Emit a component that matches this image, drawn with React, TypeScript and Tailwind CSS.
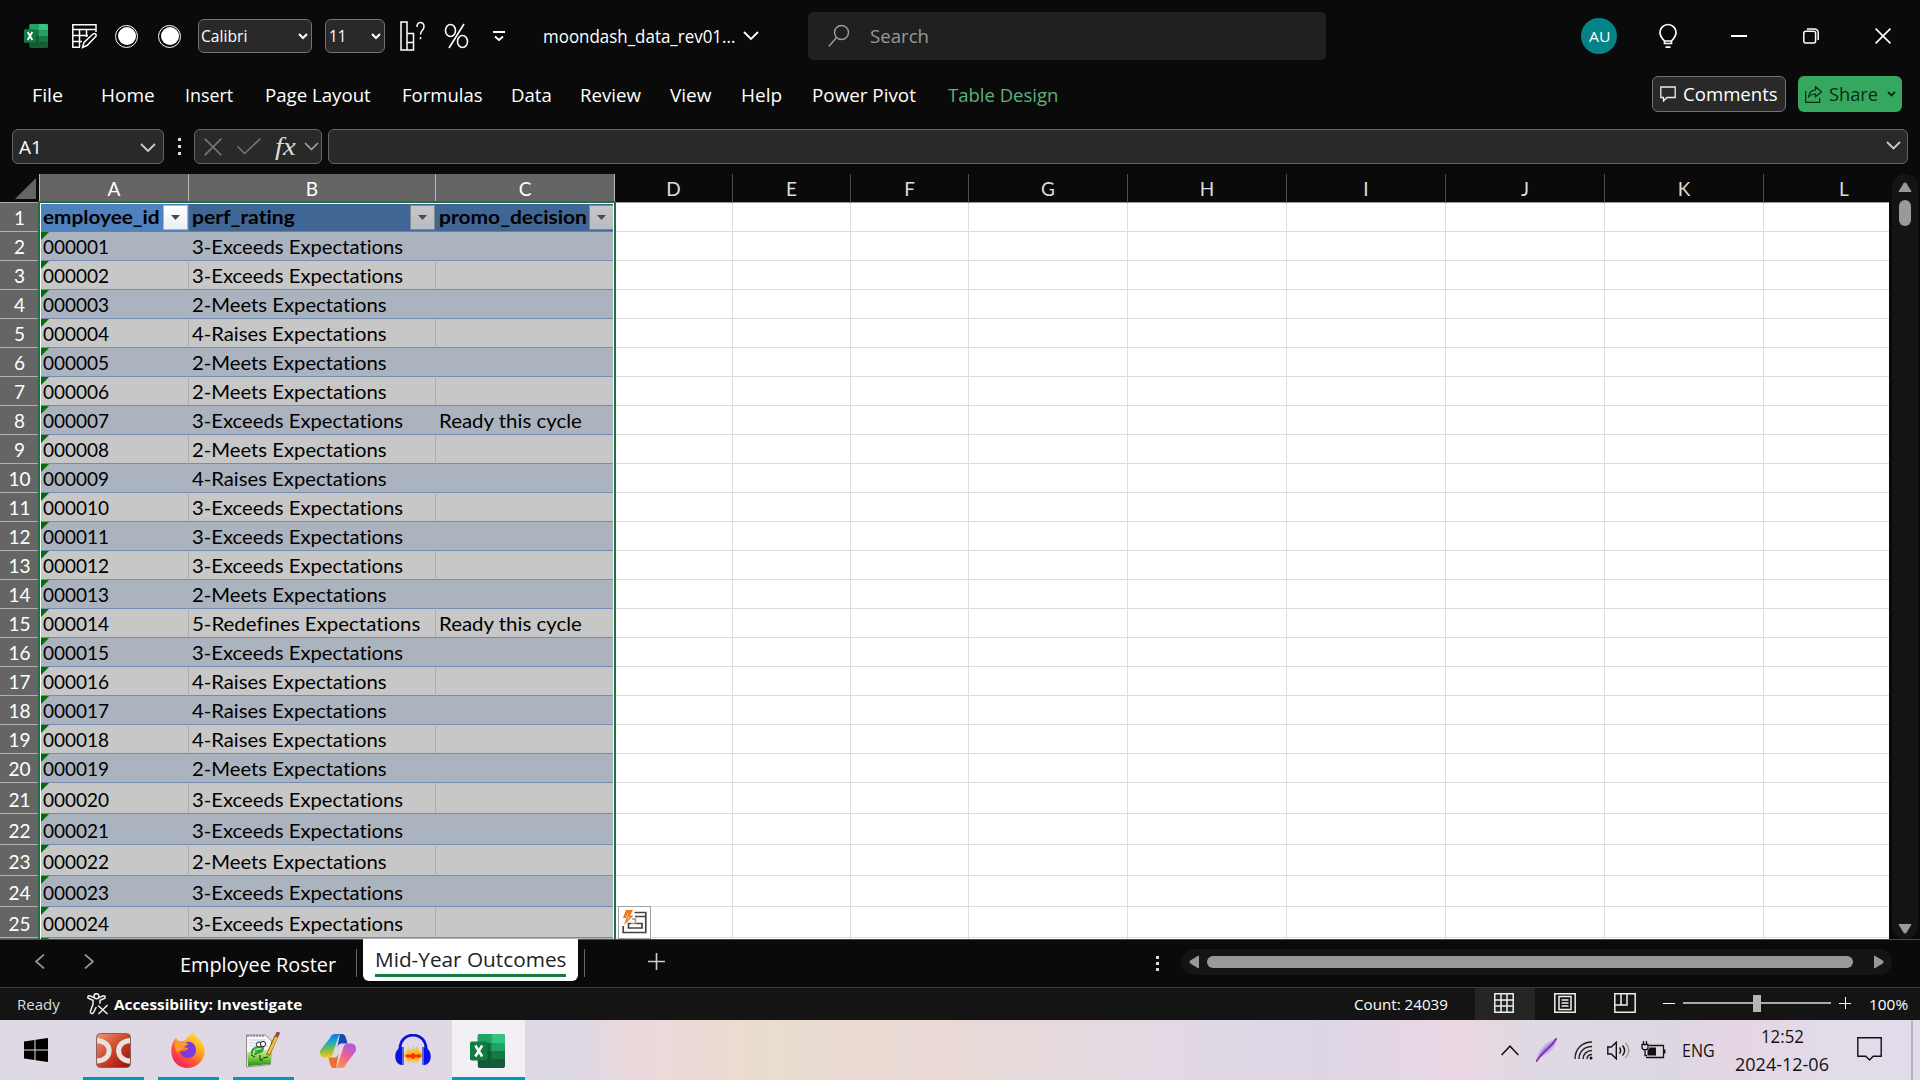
import React, { useLayoutEffect, useRef, useState } from 'react';

/* Text set to a given advance width, so labels keep their place in the bars. */
function Fit({ w, children, className = '' }: { w: number; children: string; className?: string }) {
  const ref = useRef<HTMLSpanElement>(null);
  const [s, setS] = useState(1);
  useLayoutEffect(() => {
    if (ref.current) setS(w / ref.current.offsetWidth);
  }, [w]);
  return (
    <span className={'block shrink-0 whitespace-nowrap ' + className} style={{ width: w }}>
      <span ref={ref} className="inline-block origin-left" style={{ transform: `scaleX(${s})` }}>
        {children}
      </span>
    </span>
  );
}

function Chevron({ w = 14, className = '', sw = 1.8 }: { w?: number; className?: string; sw?: number }) {
  return (
    <svg width={w} height={w / 2 + 2} viewBox={`0 0 ${w} ${w / 2 + 2}`} fill="none" stroke="currentColor" strokeWidth={sw} className={'shrink-0 ' + className}>
      <path d={`M1 1 L${w / 2} ${w / 2} L${w - 1} 1`} />
    </svg>
  );
}

function ExcelIcon({ className }: { className: string }) {
  return (
    <svg viewBox="0 0 36 34" preserveAspectRatio="none" className={className}>
      <rect x="8" y="0" width="28" height="34" rx="2" fill="#185c37" />
      <path d="M8 2a2 2 0 0 1 2-2h12v9H8z" fill="#21a366" />
      <path d="M22 0h12a2 2 0 0 1 2 2v7H22z" fill="#33c481" />
      <path d="M8 9h14v8H8z" fill="#107c41" />
      <path d="M22 9h14v8H22z" fill="#21a366" />
      <path d="M22 17h14v8H22z" fill="#107c41" />
      <rect x="8" y="9" width="12" height="20" fill="#0b4d2a" opacity=".45" />
      <rect x="0" y="7.5" width="18" height="19" rx="1.8" fill="#107c41" />
      <path d="M5.500 11.500l7 11M12.500 11.500l-7 11" stroke="#fff" strokeWidth="2.600" />
    </svg>
  );
}

function TitleBar() {
  return (
    <div className="flex h-[72px] items-center text-white">
      <ExcelIcon className="ml-6 h-6 w-6 shrink-0" />
      <svg className="ml-[23px] h-[26px] w-[26px] shrink-0" viewBox="0 0 26 26" fill="none" stroke="#fff" strokeWidth="1.5">
        <path d="M25 9V1.8H1.8V24.2H9M1.8 6.5H25M1.8 12.5H17M1.8 18.5H11M8.500 6.5V24M15.5 6.5V14" />
        <path d="M11.5 24.5l1.5-5L22 11c2-1.5 4 .5 2.700 2.500L16 22.500z" />
      </svg>
      <span className="ml-[18px] flex size-[23px] shrink-0 items-center justify-center rounded-full border border-white"><span className="size-[18px] rounded-full bg-white" /></span>
      <span className="ml-5 flex size-[23px] shrink-0 items-center justify-center rounded-full border border-white"><span className="size-[18px] rounded-full bg-white" /></span>
      <div className="ml-[17px] flex h-[34px] w-[114px] shrink-0 items-center justify-between rounded-md border border-[#737373] bg-[#292929] pl-[2px] pr-[3px] text-base">
        <Fit w={46}>Calibri</Fit><Chevron w={10} sw={2} />
      </div>
      <div className="ml-[13px] flex h-[34px] w-[60px] shrink-0 items-center justify-between rounded-md border border-[#737373] bg-[#292929] pl-[3px] pr-[3px] text-base">
        <Fit w={17}>11</Fit><Chevron w={10} sw={2} />
      </div>
      <svg className="ml-[15px] h-[30px] w-[25px] shrink-0" viewBox="0 0 25 30" fill="none" stroke="#fff" strokeWidth="1.500">
        <path d="M1 1h6v28H1zM7 12.500h6.500V29H7M7 21.500h6.500" />
        <path d="M17 6c0-6 7-6 7-.5 0 4-3.500 3.500-3.500 8M20.500 16v2.200" />
      </svg>
      <svg className="ml-[19px] h-[26px] w-[25px] shrink-0" viewBox="0 0 25 26" fill="none" stroke="#fff" strokeWidth="1.600">
        <ellipse cx="6.500" cy="7.500" rx="5" ry="6" /><ellipse cx="18.500" cy="18.500" rx="5" ry="6" /><path d="M20 1L5 25" />
      </svg>
      <svg className="ml-[24px] h-3 w-3 shrink-0" viewBox="0 0 12 12" fill="none" stroke="#fff" strokeWidth="2"><path d="M0 2h12M2 6.500l4 3.500 4-3.500" /></svg>
      <Fit w={192} className="ml-[38px] text-[18px]">moondash_data_rev01...</Fit>
      <Chevron w={16} className="ml-2" />
      <div className="ml-[49px] flex h-12 w-[518px] shrink-0 items-center rounded-[5px] bg-[#202020] text-[#999]">
        <svg className="ml-5 h-[24px] w-[22px]" viewBox="0 0 22 24" fill="none" stroke="#999" strokeWidth="1.500"><circle cx="13.500" cy="8.500" r="7" /><path d="M8.500 13.500L.8 22.500" /></svg>
        <Fit w={59} className="ml-[20px] pt-px text-[18px]">Search</Fit>
      </div>
      <span className="ml-[255px] flex size-9 shrink-0 items-center justify-center rounded-full bg-[#038387] text-[15px]"><Fit w={21}>AU</Fit></span>
      <svg className="ml-[42px] h-[26px] w-[18px] shrink-0" viewBox="0 0 18 26" fill="none" stroke="#fff" strokeWidth="1.700">
        <path d="M5.500 20.500V18C2.500 15 1 12.500 1 9.500a8 8 0 0 1 16 0c0 3-1.500 5.500-4.500 8.500v2.500zM5.500 18h7M6.500 24.200h5" />
      </svg>
      <span className="ml-[54px] h-[1.500px] w-4 shrink-0 bg-white" />
      <svg className="ml-[56px] size-4 shrink-0" viewBox="0 0 16 16" fill="none" stroke="#fff" strokeWidth="1.500"><rect x=".8" y="3.300" width="11.800" height="11.800" rx="2" /><path d="M4 .9h7.500a3.700 3.700 0 0 1 3.700 3.700V12" /></svg>
      <svg className="ml-[56px] size-4 shrink-0" viewBox="0 0 16 16" stroke="#fff" strokeWidth="1.600"><path d="M.6.600l14.800 14.800M15.400.600L.6 15.400" /></svg>
    </div>
  );
}

function Menu() {
  return (
    <div className="flex h-[45px] items-center border-b border-[#050505] text-[19px] text-white">
      <div className="flex pt-[2px]">
        <Fit w={31} className="ml-8">File</Fit>
        <Fit w={54} className="ml-[38px]">Home</Fit>
        <Fit w={48} className="ml-[30px]">Insert</Fit>
        <Fit w={106} className="ml-[32px]">Page Layout</Fit>
        <Fit w={81} className="ml-[31px]">Formulas</Fit>
        <Fit w={41} className="ml-[28px]">Data</Fit>
        <Fit w={61} className="ml-[28px]">Review</Fit>
        <Fit w={42} className="ml-[29px]">View</Fit>
        <Fit w={41} className="ml-[29px]">Help</Fit>
        <Fit w={104} className="ml-[30px]">Power Pivot</Fit>
        <Fit w={110} className="ml-[32px] text-[#5bb37c]">Table Design</Fit>
      </div>
      <div className="ml-[594px] flex h-9 w-[134px] shrink-0 items-center rounded-md border border-[#737373] bg-[#292929] pl-[7px]">
        <svg className="h-4 w-4 shrink-0" viewBox="0 0 16 16" fill="none" stroke="#eee" strokeWidth="1.300"><path d="M.8 1h14.400v10.500H7L3.500 15v-3.500H.8z" /></svg>
        <Fit w={95} className="ml-[7px] pt-px">Comments</Fit>
      </div>
      <div className="ml-3 flex h-9 w-[104px] shrink-0 items-center rounded-md bg-[#36a75e] pl-[7px] text-[#0b2a16]">
        <svg className="h-[17px] w-[17px] shrink-0" viewBox="0 0 17 17" fill="none" stroke="currentColor" strokeWidth="1.200"><path d="M.7 5v11.300h14V12M10.500.8l6 5-6 5V8C7 8 5 9 3.500 11.500 4 7 6.500 4 10.500 3.800z" /></svg>
        <Fit w={49} className="ml-[7px] pt-px">Share</Fit>
        <Chevron w={9} className="ml-[9px]" />
      </div>
    </div>
  );
}

function FormulaBar() {
  const box = 'flex h-[35px] shrink-0 items-center rounded-md border border-[#666] bg-[#292929]';
  return (
    <div className="flex h-[57px] items-start bg-[#0a0a0a] pt-3 text-white">
      <div className={box + ' ml-3 w-[152px] justify-between pl-[6px] pr-[7px] text-[19px]'}><Fit w={23} className="pt-px">A1</Fit><Chevron w={16} className="mt-[2px] text-[#ccc]" /></div>
      <div className="ml-[14px] flex h-[35px] w-1 flex-col justify-center gap-1"><i className="size-[3px] bg-[#ddd]" /><i className="size-[3px] bg-[#ddd]" /><i className="size-[3px] bg-[#ddd]" /></div>
      <div className={box + ' ml-[12px] w-[128px]'}>
        <svg className="ml-[9px] h-[18px] w-[18px] shrink-0" viewBox="0 0 18 18" stroke="#777" strokeWidth="1.500"><path d="M.6.600l16.800 16.800M17.400.600L.6 17.400" /></svg>
        <svg className="ml-[15px] h-[17px] w-[24px] shrink-0" viewBox="0 0 24 17" fill="none" stroke="#777" strokeWidth="1.500"><path d="M.6 8.500l7 7L23.400.600" /></svg>
        <Fit w={21} className="ml-[14px] font-['Liberation_Serif'] text-[26px] leading-[30px] text-[#ddd] italic">fx</Fit>
        <Chevron w={15} className="ml-[8px] text-[#aaa]" sw={1.5} />
      </div>
      <div className={box + ' ml-[6px] w-[1580px] justify-end pr-[6px]'}><Chevron w={15} className="mb-[2px] text-[#ccc]" /></div>
    </div>
  );
}

const E = ['', '', '2-Meets Expectations', '3-Exceeds Expectations', '4-Raises Expectations', '5-Redefines Expectations'];
const EW = [0, 0, 195, 211, 195, 228];
const ratings = [3, 3, 2, 4, 2, 2, 3, 2, 4, 3, 3, 3, 2, 5, 3, 4, 4, 4, 2, 3, 3, 2, 3, 3];
const blankCols = ['D', 'E', 'F', 'G', 'H', 'I', 'J', 'K', 'L'];

function FilterButton({ active = false }: { active?: boolean }) {
  return (
    <span className={'flex h-[25px] w-[25px] shrink-0 items-center justify-center border ' + (active ? 'border-[#a9b5c6] bg-linear-to-b from-white to-[#eceef4]' : 'border-[#85888e] bg-linear-to-b from-[#c7c7c7] to-[#b9bbc1]')}>
      <svg width="9" height="5" viewBox="0 0 9 5"><path d="M0 0h9L4.500 5z" fill="#4b4b4b" /></svg>
    </span>
  );
}

function BlankCells() {
  return (
    <>
      {blankCols.map((c, i) => (
        <span key={c} className={'shrink-0 border-b border-[#dedede] bg-white ' + (i < 3 ? 'w-[118px] border-r' : i < 8 ? 'w-[159px] border-r' : 'w-[126px]')} />
      ))}
    </>
  );
}

function Sheet() {
  return (
    <div className="relative h-[765px] w-[1889px] shrink-0 overflow-hidden font-['Lato',sans-serif] text-[19px] [font-variant-ligatures:none]">
      <div className="flex h-[29px] text-center text-[19px] leading-[30px] text-white">
        <span className="flex w-[39px] shrink-0 items-end justify-end border-b border-[#aaa] pr-[3px] pb-[3px]">
          <svg width="21" height="21"><path d="M21 0V21H0z" fill="#656565" /></svg>
        </span>
        <span className="w-[150px] shrink-0 border-r border-l border-[#b8b8b8] bg-[#656565]">A</span>
        <span className="w-[247px] shrink-0 border-r border-[#b8b8b8] bg-[#656565]">B</span>
        <span className="w-[179px] shrink-0 border-r border-[#b8b8b8] bg-[#656565]">C</span>
        {blankCols.map((c, i) => (
          <span key={c} className={'shrink-0 border-b border-b-[#999] border-r-[#4d4d4d] text-[#ddd] ' + (i < 3 ? 'w-[118px] border-r' : i < 8 ? 'w-[159px] border-r' : 'w-[126px] pl-[34px]')}>{c}</span>
        ))}
      </div>
      <div className="flex h-[29px]">
        <span className="w-[39px] shrink-0 border-b border-[#b0b0b0] bg-[#656565] text-center leading-[30px] text-white">1</span>
        <span className="flex w-[150px] shrink-0 items-center justify-between border-b border-[#6181ae] bg-[#4f81bd] pl-[4px] pr-[1px] font-bold"><Fit w={117} className="pt-px">employee_id</Fit><FilterButton active /></span>
        <span className="flex w-[247px] shrink-0 items-center justify-between border-b border-[#6181ae] bg-[#3f6695] pl-[3px] pr-[1px] font-bold"><Fit w={103} className="pt-px">perf_rating</Fit><FilterButton /></span>
        <span className="flex w-[179px] shrink-0 items-center justify-between border-b border-[#6181ae] bg-[#3f6695] pl-[3px] pr-[1px] font-bold"><Fit w={148} className="pt-px">promo_decision</Fit><FilterButton /></span>
        <BlankCells />
      </div>
      {ratings.concat(0).map((r, i) => {
        const band = i % 2 === 0;
        const cell = 'flex shrink-0 items-end border-b border-b-[#738cb0] leading-[26px] ' + (band ? 'bg-[#abb3bf] border-r border-r-[#abb3bf] ' : 'bg-[#c7c7c7] border-r border-r-[#adadad] ');
        return (
          <div key={i} className={'flex text-black ' + (i < 19 ? 'h-[29px]' : 'h-[31px]')}>
            <span className="flex w-[39px] shrink-0 items-end justify-center border-b border-[#b0b0b0] bg-[#656565] leading-[26px] text-white">{r > 0 && String(i + 2)}</span>
            <span className={cell + 'relative w-[150px] pl-[4px]'}>
              <svg className="absolute top-0 left-[2px]" width="8" height="8"><path d="M0 0h8L0 8z" fill="#056b05" /></svg>
              {r > 0 && <Fit w={66}>{String(i + 1).padStart(6, '0')}</Fit>}
            </span>
            <span className={cell + 'w-[247px] pl-[3px]'}>{r > 0 && <Fit w={EW[r]}>{E[r]}</Fit>}</span>
            <span className={cell + 'w-[179px] pl-[3px]'}>{(i === 6 || i === 13) && <Fit w={143}>Ready this cycle</Fit>}</span>
            <BlankCells />
          </div>
        );
      })}
      <div className="absolute top-[27px] left-[38px] h-[760px] w-[578px] border-2 border-[#1f7246]"><div className="h-full border border-white" /></div>
      <div className="absolute top-[732px] left-[618px] flex h-[33px] w-[33px] items-center justify-center border border-[#a0a0a0] bg-white">
        <svg width="25" height="25" viewBox="0 0 25 25" fill="none">
          <path d="M12.500 2.500h11.300v20H1.200V16M13 6.500h10.800M9 13.500H6.500v4.500h13.500v-4.500h-6" stroke="#444" strokeWidth="1.700" />
          <path d="M10 9h3.500v4.500H9" stroke="#999" strokeWidth="1.500" />
          <path d="M4 0h7L8 5.500h3.500L2 15l2.500-7H1z" fill="#e8761a" /><path d="M6 3L4.500 7l3 .5L5 10" stroke="#ffc08a" />
        </svg>
      </div>
    </div>
  );
}

function TabBar() {
  return (
    <div className="flex h-[49px] border-t border-b border-t-[#4a4a4a] border-b-[#3a3a3a] text-[20px] text-white">
      <svg className="mt-[14px] ml-[35px] shrink-0" width="10" height="15" fill="none" stroke="#999" strokeWidth="1.700"><path d="M9 .6L1 7.500l8 6.900" /></svg>
      <svg className="mt-[14px] ml-[39px] shrink-0" width="10" height="15" fill="none" stroke="#999" strokeWidth="1.700"><path d="M1 .6l8 6.900-8 6.900" /></svg>
      <Fit w={156} className="mt-[10px] ml-[86px] leading-[30px]">Employee Roster</Fit>
      <span className="mt-[9px] ml-[20px] h-7 w-px bg-[#666]" />
      <div className="-mt-px ml-[6px] flex h-[42px] w-[215px] shrink-0 flex-col items-center rounded-b-md bg-white font-medium text-[#222]">
        <Fit w={191} className="mt-[5px] h-[30px] leading-[32px]">Mid-Year Outcomes</Fit>
        <span className="h-[3px] w-[191px] bg-[#107c41]" />
      </div>
      <span className="mt-[9px] ml-[6px] h-7 w-px bg-[#666]" />
      <svg className="mt-[13px] ml-[63px] shrink-0" width="17" height="17" stroke="#ccc" strokeWidth="1.600"><path d="M0 8.500h17M8.500 0v17" /></svg>
      <div className="mt-[16px] ml-[491px] flex w-1 flex-col gap-[3px]"><i className="size-[3px] bg-[#ddd]" /><i className="size-[3px] bg-[#ddd]" /><i className="size-[3px] bg-[#ddd]" /></div>
      <div className="mt-[9px] ml-[21px] flex h-[26px] w-[711px] shrink-0 items-center rounded-full bg-[#141414] pl-2">
        <svg width="10" height="14"><path d="M9.500 1v12L1 7.800V6.200z" fill="#999" stroke="#999" strokeLinejoin="round" /></svg>
        <span className="ml-2 h-3 w-[646px] rounded-full bg-[#999]" />
        <svg className="ml-[21px]" width="10" height="14"><path d="M.5 1v12L9 7.800V6.200z" fill="#999" stroke="#999" strokeLinejoin="round" /></svg>
      </div>
    </div>
  );
}

function StatusBar() {
  return (
    <div className="flex h-8 items-center bg-[#141414] text-[15px] text-white">
      <Fit w={43} className="ml-[17px] text-[#ddd]">Ready</Fit>
      <svg className="ml-[27px] shrink-0" width="22" height="22" viewBox="0 0 22 22" fill="none" stroke="#eee" strokeWidth="1.500">
        <circle cx="9.500" cy="3.200" r="2.500" />
        <path d="M7 4.500L2.500 2.800C.5 2.500.2 4.800 1.800 5.500L6 7.300v4L3.500 18c-.5 2.500 2 3.500 3 1.500L9.300 14M12 4.500l4.500-1.700c2-.3 2.300 2 .7 2.700L13 7.300v3.500M11 12.500l9.500 8.500M20.500 12L11.500 21" />
      </svg>
      <Fit w={188} className="ml-[5px] font-bold">Accessibility: Investigate</Fit>
      <Fit w={94} className="ml-[1052px]">Count: 24039</Fit>
      <div className="ml-[27px] flex h-full w-[60px] shrink-0 items-center justify-center bg-[#252525] pr-[2px] pb-[2px]">
        <svg width="20" height="20" fill="none" stroke="#eee" strokeWidth="1.500"><path d="M.8.800h18.400v18.400H.8zM7 1v18M13 1v18M1 7h18M1 13h18" /></svg>
      </div>
      <svg className="mb-[2px] ml-[19px] shrink-0" width="22" height="20" fill="none" stroke="#eee" strokeWidth="1.500"><path d="M.8.800h20.400v18.400H.8zM5 3.500h12v13H5zM7.500 7h7M7.500 10h7M7.500 13h7" /></svg>
      <svg className="mb-[2px] ml-[38px] shrink-0" width="22" height="20" fill="none" stroke="#eee" strokeWidth="1.500"><path d="M.8.800h20.400v18.400H.8zM1 12h12V1M7 1v11" /></svg>
      <span className="mb-[2px] ml-[27px] h-px w-3 shrink-0 bg-white" />
      <div className="mb-[2px] ml-[8px] flex h-[18px] w-[148px] shrink-0 items-center"><span className="h-[2px] w-[70px] bg-[#aaa]" /><span className="h-[17px] w-2 bg-[#b5b5b5]" /><span className="h-[2px] w-[70px] bg-[#aaa]" /></div>
      <svg className="mb-[2px] ml-2 shrink-0" width="12" height="12" stroke="#fff" strokeWidth="1"><path d="M0 6.500h12M6.500 0v12" /></svg>
      <Fit w={39} className="ml-[18px]">100%</Fit>
    </div>
  );
}

function Taskbar() {
  const slot = 'flex h-[60px] shrink-0 items-center justify-center border-b-[3px] ';
  return (
    <div className="flex h-[60px] items-center bg-[linear-gradient(90deg,#dfd9e4_0%,#dfd8e5_30%,#ead9dc_33%,#e9dccf_39%,#e8d9d6_50%,#e2d9e4_60%,#ded6e6_69%,#ead7e3_76%,#ded9e2_80%,#ddd7e2_87%,#e6d6e3_91%,#e2dbe8_95%,#e2dcea_100%)] text-[#111]">
      <svg className="ml-6 shrink-0" width="24" height="24"><path d="M0 3.500L10.500 2v9.500H0zM11.500 1.800L24 0v11.500H11.500zM0 12.500h10.500V22L0 20.500zM11.500 12.500H24V24l-12.500-1.800z" fill="#000" /></svg>
      <span className={slot + 'ml-[35px] w-[61px] border-[#0099bc] pt-[3px]'}>
        <svg width="35" height="35" viewBox="0 0 35 35">
          <defs><linearGradient id="dc" x1="0" x2="1" y2="1"><stop stopColor="#ef9d7b" /><stop offset=".5" stopColor="#cc4428" /><stop offset="1" stopColor="#960b05" /></linearGradient><clipPath id="dcc"><rect x=".5" y=".5" width="34" height="34" rx="4" /></clipPath></defs>
          <g clipPath="url(#dcc)"><rect width="35" height="35" fill="url(#dc)" /><path d="M0 7.500c17.500 0 17.500 20.500 0 20.500M35 7.500c-16.500 0-16.500 20.500 0 20.500" fill="none" stroke="#e6e2e2" strokeWidth="5" /></g>
          <rect x=".5" y=".5" width="34" height="34" rx="4" fill="none" stroke="#8b5f5c" />
        </svg>
      </span>
      <span className={slot + 'ml-[14px] w-[61px] border-[#0099bc] pt-[2px] pr-[2px]'}>
        <svg width="34" height="36" viewBox="0 0 34 36">
          <defs><linearGradient id="ff" x1=".9" x2=".2" y2="1"><stop stopColor="#fff04a" /><stop offset=".35" stopColor="#ffb21e" /><stop offset=".65" stopColor="#ff5b36" /><stop offset="1" stopColor="#ef1866" /></linearGradient></defs>
          <path d="M22 0c1 4 8 7 10.500 13C37 25 28 36 17 36S-1 27 .5 16C1 11 3 8 5 6l1 4c2-1 4-1 6-1 3 0 4-4 10-9z" fill="url(#ff)" />
          <path d="M12 12c6-5 13-1 13 6 0 5-4 8-8.500 8S9 23 9.500 19c4 1 7-1 8-3-3 0-5-1-5.500-4z" fill="#7a3be0" />
          <path d="M5 6c1 2 3 4 5 4 3-1 5 0 7 2-1 2-4 2-5 4 0 3-5 2-5 5C3 17 3 11 5 6z" fill="#ff9a2a" />
        </svg>
      </span>
      <span className={slot + 'ml-[14px] w-[61px] border-[#0099bc] pt-[3px] pr-[2px]'}>
        <svg width="36" height="36" viewBox="0 0 36 36">
          <defs><linearGradient id="np" y2="1" x2="0"><stop stopColor="#e0f1c9" /><stop offset=".5" stopColor="#80d044" /><stop offset="1" stopColor="#258c12" /></linearGradient></defs>
          <path d="M1.500 3h19l6 6-1 23.500-24 2.500z" fill="#f7f7f7" stroke="#8c8c8c" />
          <path d="M2 20l25-3-2 15-22 2z" fill="url(#np)" /><path d="M3 3v2M6 3v2M9 3v2M12 3v2M15 3v2M18 3v2" stroke="#555" />
          <path d="M4 8h17M4 11h18M4 14h19" stroke="#bcd4e8" />
          <path d="M7 22c-1-6 6-8 11-6l-1 3c-4 3-7 1-7 4M10 19l7-1" stroke="#2fa52f" strokeWidth="2.200" fill="none" />
          <circle cx="14" cy="12.500" r="2.600" fill="#fff" stroke="#222" /><circle cx="18" cy="12" r="2.600" fill="#fff" stroke="#222" />
          <path d="M15 23v5h3M18 26l5-1M6 23l4 2" stroke="#222" fill="none" />
          <path d="M31.500 4L23 23" stroke="#8a5a14" strokeWidth="4" /><path d="M31.500 5L23.500 22" stroke="#f5bf45" strokeWidth="2.600" /><path d="M33.500 0l-2 4.500" stroke="#98433b" strokeWidth="3.500" />
        </svg>
      </span>
      <svg className="mt-[2px] ml-[26px] shrink-0" width="36" height="34" viewBox="0 0 36 34">
        <defs>
          <linearGradient id="c1" y2="1" x2=".1"><stop stopColor="#0c6fe0" /><stop offset=".35" stopColor="#1aa6ce" /><stop offset=".65" stopColor="#6dbb5a" /><stop offset="1" stopColor="#f6c90c" /></linearGradient>
          <linearGradient id="c2" x1=".8" x2=".1" y2="1"><stop stopColor="#a959e8" /><stop offset=".5" stopColor="#f0628c" /><stop offset="1" stopColor="#ff9a43" /></linearGradient>
        </defs>
        <path d="M20 0h2c2 0 3 1 4 4l1.500 5.500H22c-3 0-4 1.500-5 5z" fill="#1746b8" />
        <path d="M16 34h-2c-2 0-3-1-4-4l-1.500-6.500H14c3 0 4-1.500 5-5z" fill="#f0702a" />
        <path d="M10 4c1-3 3-4 5-4h7c-2 0-3 1.500-4 4l-5 15c-1 3-2 4.500-5 4.500H5c-4 0-6-3-4.500-7.500z" fill="url(#c1)" />
        <path d="M26 30c-1 3-3 4-5 4h-7c2 0 3-1.500 4-4l5-15.500c1-3.500 2-5 5-5h3c4 0 6 3.500 4.500 8z" fill="url(#c2)" />
      </svg>
      <svg className="mt-[2px] ml-[39px] shrink-0" width="36" height="34" viewBox="0 0 36 34">
        <path d="M5 15C5-3.500 31-3.500 31 15" fill="none" stroke="#0b12e0" strokeWidth="2.800" />
        <path d="M7 13v18C-2 30-2 15 7 13zM29 13v18c9-1 9-16 0-18z" fill="#0a10e8" /><path d="M8 13v18M28 13v18" stroke="#5e68c9" strokeWidth="2" />
        <path d="M9 22l1-4 1 3 1-7 1 6 1-8 1 7 1-5 1 6 1-10 1 9 1-5 1 4 1-7 1 8 1-5 1 5 1-2 1 4-1 4-1-2-1 5-1-4-1 6-1-5-1 4-1-5-1 7-1-7-1 4-1-3-1 5-1-6-1 4-1-4z" fill="#ffb400" />
        <path d="M10 22l3-2 2 1 3-2 3 2 3-1 3 2-3 2-3-1-3 2-3-2-2 1z" fill="#ff2b0a" />
      </svg>
      <span className={slot + 'ml-[21px] w-[73px] border-[#0099bc] bg-[#f2f0f4] pt-[4px] pr-[3px]'}><ExcelIcon className="h-[34px] w-[35px]" /></span>
      <svg className="ml-[976px] shrink-0" width="18" height="11" fill="none" stroke="#111" strokeWidth="1.500"><path d="M.6 10L9 1.200 17.400 10" /></svg>
      <svg className="ml-[17px] shrink-0" width="21" height="24" viewBox="0 0 21 24"><path d="M0 24C1 13 9 4 21 0c0 9-8 16-18 20z" fill="#c3b0e6" /><path d="M2 20C5 12 12 8 20.500.5 19 9 9 13 2 20z" fill="#a873dc" /><path d="M0 24C5 15 14 11 20.500 0" stroke="#7a2bb0" strokeWidth="1.500" fill="none" /></svg>
      <svg className="ml-[17px] shrink-0" width="19" height="19" fill="none" stroke="#222" strokeWidth="1.400"><path d="M1 18C1 8 8 1 18 1M5 18C5 10.500 10.500 5.500 18 5.500M9 18c0-5 4-8.500 9-8.500M13 18c0-3 2-4.500 5-4.500" /><circle cx="17" cy="17" r="1.500" fill="#111" stroke="none" /></svg>
      <svg className="ml-[14px] shrink-0" width="23" height="19" fill="none" stroke="#111" strokeWidth="1.400"><path d="M.8 6v7h3.500l5 4.800V1.200L4.300 6zM12.500 6.500c1.500 2 1.500 4 0 6M15.500 4.500c3 3.500 3 6.500 0 10" /><path d="M18.500 2c4.500 5 4.500 10 0 15" stroke="#999" /></svg>
      <svg className="ml-[11px] shrink-0" width="25" height="18" fill="none" stroke="#111" strokeWidth="1.300"><path d="M8 4.500h14.500v12H5M23.800 8.500v4M1 3.500v3c0 3 6 3 6 0v-3zM2.500 0v3.500M5.500 0v3.500M4 9v5.500h2" /><path d="M6.500 9.500L8.500 7V6.500H15v8H6.500z" fill="#111" stroke="none" /></svg>
      <Fit w={33} className="ml-[16px] text-[18px]">ENG</Fit>
      <div className="ml-5 flex h-full w-[94px] shrink-0 flex-col items-center pt-[2px] text-[18px] leading-[28px]">
        <Fit w={43}>12:52</Fit><Fit w={94}>2024-12-06</Fit>
      </div>
      <svg className="mb-px ml-[28px] shrink-0" width="25" height="25" fill="none" stroke="#111" strokeWidth="1.400"><path d="M.8.800h23.400v18.500h-8L12.500 23 8.800 19.300h-8z" /></svg>
      <span className="ml-[29px] h-[60px] w-[2px] shrink-0 bg-[#b9b4c2]" />
    </div>
  );
}

export default function App() {
  return (
    <div className="flex h-[1080px] w-[1920px] flex-col overflow-hidden bg-[#0a0a0a] font-['Open_Sans',sans-serif]">
      <TitleBar />
      <Menu />
      <FormulaBar />
      <div className="flex h-[765px] shrink-0">
        <Sheet />
        <div className="ml-[3px] flex h-[765px] w-[26px] flex-col items-center rounded-full bg-[#141414] pt-2 pb-[5px]">
          <svg width="14" height="10"><path d="M1 9.500h12L7.800 1H6.200z" fill="#999" stroke="#999" strokeLinejoin="round" /></svg>
          <span className="mt-2 h-[26px] w-3 rounded-full bg-[#999]" />
          <svg className="mt-auto" width="14" height="10"><path d="M1 .5h12L7.800 9H6.200z" fill="#999" stroke="#999" strokeLinejoin="round" /></svg>
        </div>
      </div>
      <TabBar />
      <StatusBar />
      <Taskbar />
    </div>
  );
}
